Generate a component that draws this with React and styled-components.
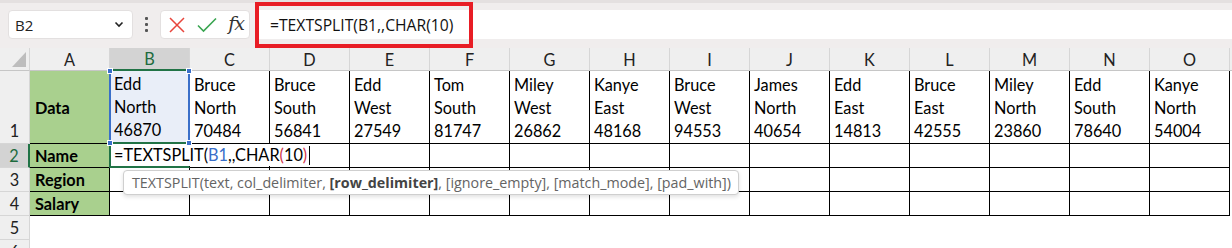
import React from 'react'
import styled, { createGlobalStyle, css } from 'styled-components'

const GlobalStyle = createGlobalStyle`
  html, body {
    margin: 0;
    padding: 0;
    background: #ffffff;
    overflow: hidden;
  }
  * { box-sizing: border-box; }
`

const columns = ['A', 'B', 'C', 'D', 'E', 'F', 'G', 'H', 'I', 'J', 'K', 'L', 'M', 'N', 'O']

const data = [
  ['Edd', 'North', '46870'],
  ['Bruce', 'North', '70484'],
  ['Bruce', 'South', '56841'],
  ['Edd', 'West', '27549'],
  ['Tom', 'South', '81747'],
  ['Miley', 'West', '26862'],
  ['Kanye', 'East', '48168'],
  ['Bruce', 'West', '94553'],
  ['James', 'North', '40654'],
  ['Edd', 'East', '14813'],
  ['Bruce', 'East', '42555'],
  ['Miley', 'North', '23860'],
  ['Edd', 'South', '78640'],
  ['Kanye', 'North', '54004'],
]

const labels = ['Data', 'Name', 'Region', 'Salary']

function App() {
  return (
    <>
      <GlobalStyle />
      <Page>
        <Toolbar>
          <NameBox>
            <span>B2</span>
            <svg width="10" height="7" viewBox="0 0 10 7">
              <path d="M1.5 1.5 L5 5 L8.5 1.5" fill="none" stroke="#222" strokeWidth="1.6" />
            </svg>
          </NameBox>
          <Dots>
            <i /><i /><i />
          </Dots>
          <Buttons>
            <svg width="16" height="16" viewBox="0 0 16 16">
              <path d="M1 1 L15 15 M15 1 L1 15" stroke="#e8453c" strokeWidth="1.5" />
            </svg>
            <svg width="20" height="16" viewBox="0 0 20 16">
              <path d="M1 8.5 L6.5 14 L19 1.5" fill="none" stroke="#3aa551" strokeWidth="1.6" />
            </svg>
            <Fx>fx</Fx>
          </Buttons>
          <FormulaInput>
            <FormulaText>=TEXTSPLIT(B1,,CHAR(10)</FormulaText>
            <Highlight />
          </FormulaInput>
        </Toolbar>

        <Sheet>
          <Corner>
            <svg width="14" height="15" viewBox="0 0 14 15">
              <path d="M14 0 L14 15 L0 15 Z" fill="#bdbdbd" />
            </svg>
          </Corner>
          {columns.map((c) => (
            <ColHead key={c} $active={c === 'B'}>{c}</ColHead>
          ))}
          <Filler $head />

          {[1, 2, 3, 4].map((r) => (
            <React.Fragment key={r}>
              <RowHead $active={r === 2} $tall={r === 1}>{r}</RowHead>
              <LabelCell>{labels[r - 1]}</LabelCell>
              {data.map((d, i) => {
                if (r === 1) {
                  return (
                    <DataCell key={i} $ref={i === 0}>
                      <Lines>
                        {d.map((t) => <div key={t}>{t}</div>)}
                      </Lines>
                      {i === 0 && (
                        <>
                          <Handle $top $left />
                          <Handle $top />
                          <Handle $left />
                          <Handle />
                        </>
                      )}
                    </DataCell>
                  )
                }
                if (r === 2 && i === 0) {
                  return (
                    <DataCell key={i} $active>
                      <Editor>
                        =TEXTSPLIT(<Ref>B1</Ref>,,CHAR<Paren>(</Paren>10<Paren>)</Paren>
                        <Caret />
                      </Editor>
                      <Tip>
                        <span>
                          TEXTSPLIT(text, col_delimiter, <b>[row_delimiter]</b>, [ignore_empty], [match_mode], [pad_with])
                        </span>
                      </Tip>
                    </DataCell>
                  )
                }
                return <DataCell key={i} />
              })}
              <Filler />
            </React.Fragment>
          ))}

          {[5, 6].map((r) => (
            <React.Fragment key={r}>
              <RowHead>{r}</RowHead>
              <Empty />
            </React.Fragment>
          ))}
        </Sheet>
      </Page>
    </>
  )
}

export default App

const Page = styled.div`
  width: 1232px;
  height: 248px;
  overflow: hidden;
  font-family: "Lato", "Liberation Sans", sans-serif;
`

const Toolbar = styled.div`
  height: 48px;
  background: #f0eded;
  border-top: 3px solid #e4e0e0;
  display: flex;
  align-items: center;
  padding: 4px 0 6px 8px;
  font-family: "Open Sans", "Noto Sans", sans-serif;
`

const NameBox = styled.div`
  width: 125px;
  height: 29px;
  background: #fff;
  border: 1px solid #e3e0e0;
  border-radius: 4px;
  display: flex;
  align-items: center;
  justify-content: space-between;
  padding: 0 8px 0 6px;
  font-size: 15px;
  color: #222;
`

const Dots = styled.div`
  width: 27px;
  display: flex;
  flex-direction: column;
  align-items: center;
  gap: 3px;
  i {
    width: 3px;
    height: 3px;
    background: #555;
    border-radius: 1px;
  }
`

const Buttons = styled.div`
  width: 90px;
  height: 29px;
  background: #fff;
  border: 1px solid #e3e0e0;
  border-radius: 4px;
  display: flex;
  align-items: center;
  justify-content: space-between;
  padding: 0 5px 0 8px;
`

const Fx = styled.span`
  font-family: "DejaVu Serif", "Liberation Serif", serif;
  font-style: italic;
  font-size: 19px;
  color: #333;
  letter-spacing: -1px;
  padding-bottom: 3px;
`

const FormulaInput = styled.div`
  position: relative;
  flex: 1;
  height: 29px;
  margin-left: 7px;
  background: #fff;
  display: flex;
  align-items: center;
  padding-left: 13px;
`

const FormulaText = styled.span`
  font-size: 15.7px;
  color: #111;
`

const Highlight = styled.div`
  position: absolute;
  left: -2px;
  top: -8px;
  width: 218px;
  height: 46px;
  border: 4px solid #e81d25;
`

const Sheet = styled.div`
  display: grid;
  grid-template-columns: 30px repeat(15, 80px) 1fr;
  grid-template-rows: 23px 73px repeat(5, 24px);
  font-size: 16.3px;
  color: #000;
`

const headBase = css`
  background: #efefef;
  display: flex;
  justify-content: center;
  color: #222;
`

const Corner = styled.div`
  ${headBase};
  align-items: flex-end;
  justify-content: flex-end;
  padding: 0 3px 3px 0;
  border-right: 1px solid #d6d6d6;
  border-bottom: 1px solid #c6c6c6;
`

const ColHead = styled.div`
  ${headBase};
  align-items: center;
  border-right: 1px solid #d6d6d6;
  border-bottom: 1px solid #c6c6c6;
  ${(p) => p.$active && css`
    background: #d3d3d3;
    color: #1e6b3e;
    border-bottom: 2px solid #217346;
  `}
`

const RowHead = styled.div`
  ${headBase};
  align-items: ${(p) => (p.$tall ? 'flex-end' : 'center')};
  padding-bottom: ${(p) => (p.$tall ? '3px' : '0')};
  border-right: 1px solid #d6d6d6;
  border-bottom: 1px solid #d6d6d6;
  ${(p) => p.$active && css`
    background: #d3d3d3;
    color: #1e6b3e;
    border-right: 2px solid #217346;
  `}
`

const Filler = styled.div`
  background: ${(p) => (p.$head ? '#efefef' : '#fff')};
  border-bottom: ${(p) => (p.$head ? '1px solid #c6c6c6' : 'none')};
`

const Empty = styled.div`
  grid-column: 2 / -1;
  background: #fff;
`

const LabelCell = styled.div`
  background: #a9d08e;
  font-weight: 700;
  display: flex;
  align-items: center;
  padding-left: 5px;
  border-right: 1px solid #000;
  border-bottom: 1px solid #000;
`

const DataCell = styled.div`
  position: relative;
  background: #fff;
  border-right: 1px solid #000;
  border-bottom: 1px solid #000;
  padding-left: 4px;
  ${(p) => p.$ref && css`
    background: #e9eef8;
    border-left: 2px solid #3a6fc9;
    border-right: 2px solid #3a6fc9;
    border-bottom: 2px solid #217346;
    margin-left: -1px;
    padding-left: 3px;
  `}
  ${(p) => p.$active && css`
    border-left: 2px solid #217346;
    border-bottom: 2px solid #217346;
    margin-left: -1px;
  `}
`

const Lines = styled.div`
  height: 100%;
  display: flex;
  flex-direction: column;
  justify-content: flex-end;
  line-height: 23px;
  padding-bottom: 1px;
`

const Handle = styled.div`
  position: absolute;
  width: 6px;
  height: 6px;
  background: #3a6fc9;
  border: 1px solid #fff;
  z-index: 3;
  ${(p) => (p.$top ? 'top: -3px;' : 'bottom: -4px;')}
  ${(p) => (p.$left ? 'left: -4px;' : 'right: -4px;')}
`

const Editor = styled.div`
  position: absolute;
  left: 0;
  top: 0;
  height: 22px;
  line-height: 22px;
  padding-left: 3px;
  min-width: 190px;
  padding-right: 4px;
  background: #fff;
  z-index: 2;
  white-space: nowrap;
`

const Ref = styled.span`
  color: #3a6fc9;
`

const Paren = styled.span`
  color: #d0344a;
`

const Caret = styled.span`
  display: inline-block;
  width: 1px;
  height: 19px;
  background: #000;
  margin-left: 2px;
  vertical-align: -4px;
`

const Tip = styled.div`
  position: absolute;
  left: 12px;
  top: 26px;
  width: 616px;
  height: 25px;
  background: #fff;
  border: 1px solid #cfcfcf;
  border-radius: 4px;
  box-shadow: 0 2px 4px rgba(0, 0, 0, 0.12);
  z-index: 4;
  display: flex;
  align-items: center;
  padding-left: 8px;
  font-family: "Open Sans", "Noto Sans", sans-serif;
  font-size: 14.3px;
  color: #646464;
  white-space: nowrap;
  b {
    font-weight: 700;
    color: #444;
  }
`
